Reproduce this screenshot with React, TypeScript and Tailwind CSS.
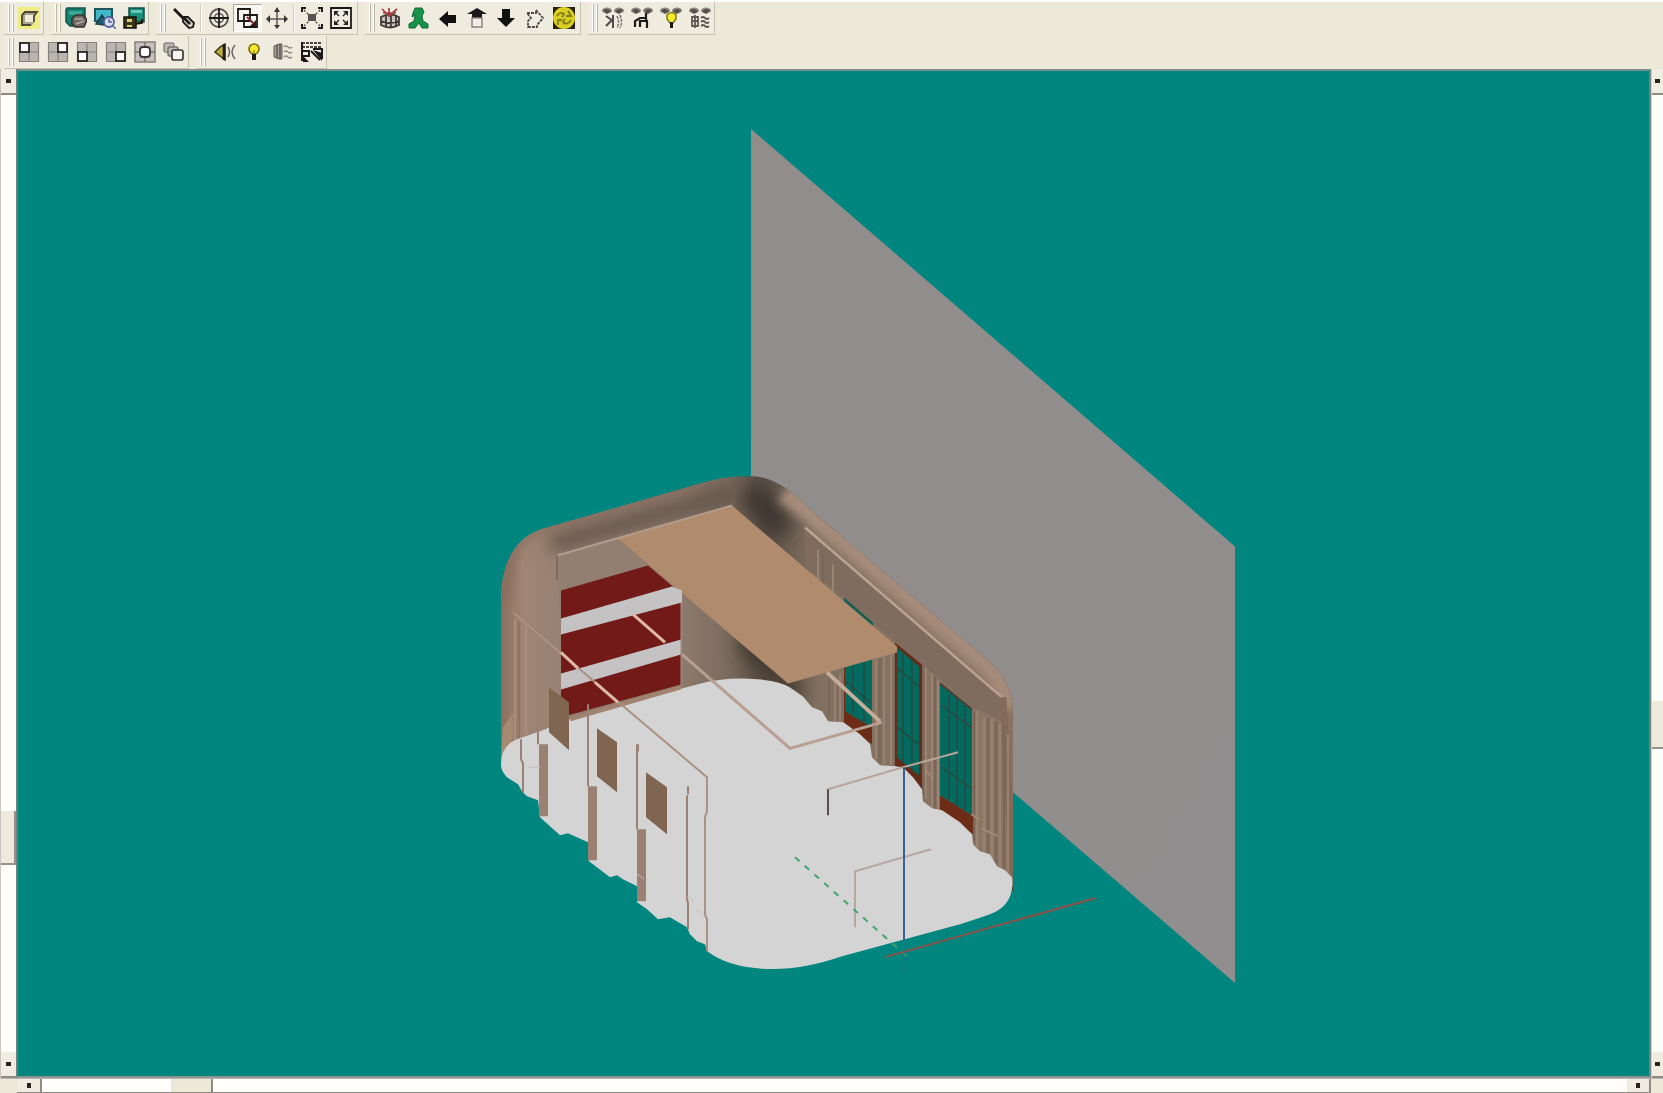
import type { ReactNode } from "react";

function Svg({ children }: { children: ReactNode }) {
  return (
    <svg viewBox="0 0 22 22" className="h-[22px] w-[22px]" fill="none" stroke="#1c1a18" strokeWidth="1.5">
      {children}
    </svg>
  );
}

function ToolButton({ label, pressed, children }: { label: string; pressed?: boolean; children: ReactNode }) {
  return (
    <button
      type="button"
      aria-label={label}
      className={
        pressed
          ? "flex h-7 w-[29px] items-center justify-center border border-r-white border-b-white border-t-[#aca899] border-l-[#aca899] bg-[#f8f6f0]"
          : "flex h-7 w-[29px] items-center justify-center"
      }
    >
      <Svg>{children}</Svg>
    </button>
  );
}

function Bar({ children }: { children: ReactNode }) {
  return (
    <div role="toolbar" className="flex h-[33px] items-center border-r border-b border-[#c5c2b4] bg-[#efecdf] pl-1">
      <span className="flex gap-[2px]">
        <span className="h-7 w-[2px] border-r border-[#bdb9aa] bg-white" />
        <span className="h-7 w-[2px] border-r border-[#bdb9aa] bg-white" />
      </span>
      {children}
    </div>
  );
}

function Divider() {
  return <span className="mx-[2px] h-7 w-[2px] border-l border-[#d2cfc0] bg-white" />;
}

function Viewports({ x, y }: { x: number; y: number }) {
  return (
    <>
      <rect x="1" y="1" width="20" height="20" fill="#b9b6b2" stroke="none" />
      <path d="M1.5 1.5h19v19h-19zM11 1v20M1 11h20" stroke="#85817d" strokeWidth="1.2" />
      <rect x={x} y={y} width="9" height="9" fill="#fff" stroke="#2a2826" strokeWidth="1.8" />
    </>
  );
}

function Eyes() {
  return (
    <g stroke="none">
      <ellipse cx="5" cy="3.5" rx="5" ry="3" fill="#8a857f" />
      <ellipse cx="17" cy="3.5" rx="5" ry="3" fill="#8a857f" />
      <path d="M1 3l4-1 4 2-4 3zM13 4l4-2 4 1-4 4z" fill="#514d49" />
    </g>
  );
}

function TopToolbars() {
  return (
    <div className="flex gap-[7px] pl-1">
      <Bar>
        <ToolButton label="Render box">
          <rect width="22" height="22" fill="#efec86" stroke="none" />
          <path d="M3 8l4-4h13l-4 4v8l-3 3H3z" fill="#a9a48f" stroke="none" />
          <path d="M4 8v10h9M4 8l3-3h12l-3 4v6" stroke="#4d4933" strokeWidth="1.8" />
          <path d="M7 8h8v7H7z" fill="#efecd9" stroke="none" />
        </ToolButton>
      </Bar>
      <Bar>
        <ToolButton label="Print scene">
          <path d="M2 1h18v12l-2 6H5l-4-4V3z" fill="#0d8370" stroke="#18514b" />
          <path d="M4 4h13v4H4z" fill="#3ea896" stroke="none" />
          <path d="M7 11l4-3h7l4 5-3 7h-9l-3-3z" fill="#706a65" stroke="#34302e" />
          <path d="M10 12h8M11 17l8-3" stroke="#b2aca4" />
        </ToolButton>
        <ToolButton label="Preview scene">
          <rect x="1" y="2" width="17" height="12" fill="#3fbac6" stroke="#23545e" strokeWidth="2" />
          <path d="M2 17l6-9 4 6-2 4z" fill="#176170" stroke="#233b44" />
          <circle cx="15" cy="15" r="5" fill="#dce0ed" stroke="#5361a0" strokeWidth="1.8" />
          <path d="M18 18l4 4M15 12v3h3" stroke="#5361a0" />
        </ToolButton>
        <ToolButton label="Save scene">
          <path d="M6 1h15v14H6z" fill="#178f7c" stroke="#164b42" />
          <path d="M8 3h11v3H8z" fill="#65c6b8" stroke="none" />
          <path d="M1 10h12v11H1zM13 17l6-1v-4" fill="#3b351c" stroke="#15120a" />
          <path d="M4 12h5v3H4zM4 18h5v2H4z" fill="#d9cf75" stroke="none" />
        </ToolButton>
      </Bar>
      <Bar>
        <span className="w-[3px]" />
        <ToolButton label="Brush">
          <path d="M1 2l11 11" strokeWidth="3" />
          <path d="M10 10h5l6 6-1 4-4 1-6-6z" fill="#d6d2c7" strokeWidth="1.8" />
          <path d="M10 10l7 7" strokeWidth="2.6" />
        </ToolButton>
        <Divider />
        <ToolButton label="Orbit">
          <circle cx="11" cy="11" r="9" stroke="#55514c" strokeWidth="1.8" />
          <circle cx="11" cy="11" r="4.5" stroke="#55514c" />
          <path d="M11 1v20M1 11h20" strokeWidth="1.8" />
        </ToolButton>
        <ToolButton label="Zoom window" pressed>
          <path d="M1 2h12v12H1z" strokeWidth="1.8" />
          <path d="M7 8h13v12H7z" strokeWidth="1.8" />
          <path d="M10 10l6 6" stroke="#7e2c2c" strokeWidth="2" />
          <path d="M19 13v6h-6z" fill="#3b1818" stroke="none" />
        </ToolButton>
        <ToolButton label="Pan">
          <path d="M11 2v17M2 12h18" stroke="#5a5651" />
          <path d="M11 0l3 5H8zM11 22l3-4H8zM0 12l4-4v8zM22 12l-4-4v8z" fill="#3a3733" stroke="none" />
        </ToolButton>
        <Divider />
        <ToolButton label="Zoom in">
          <path d="M1 5V1h4M17 1h4v4M1 17v4h4M21 17v4h-4" strokeWidth="2" />
          <path d="M3 3l5 5M19 3l-5 5M3 19l5-5M19 19l-5-5" stroke="#55514d" strokeDasharray="2 2" />
          <rect x="7" y="7" width="8" height="7" fill="#55514d" stroke="none" />
        </ToolButton>
        <ToolButton label="Zoom extents">
          <path d="M1 1h20v20H1z" strokeWidth="1.8" />
          <path d="M4 4h5L4 9zM18 4h-5l5 5zM4 18h5l-5-5zM18 18h-5l5-5z" fill="#2b2926" stroke="none" />
          <path d="M5 5l4 4M17 5l-4 4M5 17l4-4M17 17l-4-4" strokeWidth="1.3" />
        </ToolButton>
        <span className="w-[2px]" />
      </Bar>
      <Bar>
        <ToolButton label="Scene cage">
          <path d="M2 10q9-5 18 0v8q-9 5-18 0zM2 14q9 4 18 0M7 8v12M12 7v14M17 8v12" fill="#c9c4bd" stroke="#3f3b38" strokeWidth="1.8" />
          <path d="M3 2l7 7M18 2l-8 7M10 1v9M4 6h13" stroke="#a53b42" strokeWidth="1.7" />
        </ToolButton>
        <ToolButton label="Walk">
          <path d="M7 1h7l2 4-2 4 1 5 5 3v4h-6l-3-5-4 5H1v-4l5-3 1-6-3 2 1-4z" fill="#169348" stroke="#166737" strokeWidth="1" />
        </ToolButton>
        <ToolButton label="Move left">
          <path d="M2 12l9-8v4h8v8h-8v4z" fill="#111" stroke="none" />
        </ToolButton>
        <ToolButton label="Move back">
          <path d="M11 1l10 6h-5v4H6V7H1z" fill="#171717" stroke="none" />
          <path d="M6 11h10v9H6z" fill="#f1eee6" stroke="#8a8680" />
        </ToolButton>
        <ToolButton label="Move down">
          <path d="M7 2h8v9h5l-9 9-9-9h5z" fill="#111" stroke="none" />
        </ToolButton>
        <ToolButton label="Turn">
          <path d="M3 6h9V3l7 8-6 7v2H4v-6l3-3z" fill="#f1eee6" stroke="#4e4b45" strokeDasharray="3 1" strokeWidth="1.8" />
        </ToolButton>
        <ToolButton label="Rotate view">
          <rect width="22" height="22" fill="#262114" stroke="none" />
          <circle cx="11" cy="11" r="11" fill="#d8cf22" stroke="none" />
          <path d="M4 9q3-5 7-2l-2 3M18 13q-4 6-8 2l2-3M15 4l3 5h-5M5 18v-5h4" stroke="#817a18" strokeWidth="1.8" />
        </ToolButton>
        <span className="w-[2px]" />
      </Bar>
      <Bar>
        <ToolButton label="View speakers">
          <Eyes />
          <path d="M4 9l7 5M4 19l7-7M11 8v13" stroke="#4e4a46" strokeWidth="2" />
          <path d="M15 9q3 6 0 12M18 8q3 7 0 13" stroke="#77736e" strokeDasharray="3 1" />
        </ToolButton>
        <ToolButton label="View seating">
          <Eyes />
          <path d="M4 20v-6l5-3h6M9 13v7M15 6v8M8 14h8v7" strokeWidth="2.2" />
        </ToolButton>
        <ToolButton label="View lights">
          <Eyes />
          <path d="M7 8q5-5 9 0v4l-3 4h-3l-3-4z" fill="#f4ed29" stroke="#807a1a" />
          <path d="M11.5 15v6" strokeWidth="3" />
        </ToolButton>
        <ToolButton label="View surfaces">
          <Eyes />
          <path d="M3 10h6v9H3zM6 8v13M3 14h6M12 11q2-2 4 0t4 0M12 15q2-2 4 0t4 0M12 19q2-2 4 0t4 0" stroke="#5e5a56" strokeWidth="1.8" />
        </ToolButton>
      </Bar>
    </div>
  );
}

function LowerToolbars() {
  return (
    <div className="flex gap-[7px] pl-1">
      <Bar>
        <ToolButton label="Top left view"><Viewports x={2} y={2} /></ToolButton>
        <ToolButton label="Top right view"><Viewports x={11} y={2} /></ToolButton>
        <ToolButton label="Bottom left view"><Viewports x={2} y={11} /></ToolButton>
        <ToolButton label="Bottom right view"><Viewports x={11} y={11} /></ToolButton>
        <ToolButton label="Centre view">
          <rect x="1" y="1" width="20" height="20" fill="#c4c0bd" stroke="#85817d" />
          <path d="M11 1v20M1 11h20" stroke="#77736f" />
          <rect x="6" y="6" width="10" height="10" rx="3" fill="#fff" stroke="#3a3836" strokeWidth="1.8" />
        </ToolButton>
        <ToolButton label="Cascade views">
          <rect x="1" y="2" width="10" height="9" rx="2" fill="#bbb7b2" stroke="#8b8783" />
          <rect x="5" y="6" width="10" height="9" rx="2" fill="#bbb7b2" stroke="#77736f" />
          <rect x="9" y="9" width="11" height="10" rx="2" fill="#f7f5f0" stroke="#3a3836" strokeWidth="1.7" />
        </ToolButton>
      </Bar>
      <Bar>
        <span className="w-1" />
        <ToolButton label="Speakers">
          <path d="M1 11l5-5 5-3v16l-5-4z" fill="#b7ac38" stroke="#38341d" />
          <path d="M10 3v16" strokeWidth="2.5" />
          <path d="M14 6q3 5 0 10M21 4q-6 7 0 14" stroke="#6a6661" />
        </ToolButton>
        <ToolButton label="Lights">
          <circle cx="11" cy="8" r="5" fill="#f5e82d" stroke="#7b731f" strokeWidth="1.7" />
          <path d="M11 9v5" stroke="#9a8d1b" />
          <path d="M11 13v6" strokeWidth="4" />
        </ToolButton>
        <ToolButton label="Surfaces">
          <path d="M2 5l5-2h3v15H7l-5-2z" fill="#a5a19b" stroke="#5e5a56" strokeWidth="1" />
          <path d="M5 4v13M8 3v15" stroke="#5e5a56" />
          <path d="M12 6q2-2 4 0t4 0M12 11q2-2 4 0t4 0M12 16q2-2 4 0t4 0" stroke="#8e8a86" strokeWidth="1.5" />
        </ToolButton>
        <ToolButton label="Settings list">
          <path d="M1 2h20M1 6h20" stroke="#4a4642" strokeWidth="2" strokeDasharray="3 1" />
          <path d="M1 1v19M2 10h6v5H2M10 10l9 9M12 8h9v10" strokeWidth="2" />
          <path d="M12 9l9 3v8zM2 15l6 6H2z" fill="#171717" stroke="none" />
        </ToolButton>
      </Bar>
    </div>
  );
}

const floorPath =
  "M501 765Q501 746 517 740L540 732 570 720 623 705 697 685Q718 679 743 679Q778 680 790 688L803 697 812 708 822 712 828 722 843 723 860 735 870 745 872 758 880 766 895 767 903 768 913 778 922 790 923 802 932 809 942 811 960 823 972 835 973 845 980 852 990 855 997 867 1005 871 1012 878Q1015 906 990 915Q970 922 960 925L843 957Q805 970 773 970Q730 970 707 952L705 945 697 942 690 935 687 928 670 918 658 920 647 910 637 903V887L623 880 617 876 610 878 589 862 588 843 568 834 560 836 540 818 538 801 527 797 522 792 518 785 507 778Q501 772 501 765Z";

const shellPath =
  "M501 770V593C504 553 522 534 547 528L700 484Q727 475 757 477Q783 481 810 510L987 660Q1013 681 1013 715V892L800 760H520Z";

function Scene() {
  return (
    <svg role="img" aria-label="Room model" viewBox="18 71 1631 1006" preserveAspectRatio="none" className="block h-full w-full">
      <defs>
        <linearGradient id="plane" x1="0" y1="0" x2="1" y2="1">
          <stop offset="0" stopColor="#908d8b" />
          <stop offset="1" stopColor="#928e8f" />
        </linearGradient>
        <linearGradient id="leftWall" x1="501" y1="0" x2="770" y2="0" gradientUnits="userSpaceOnUse">
          <stop offset="0" stopColor="#8b6f5d" />
          <stop offset="0.08" stopColor="#a08574" />
          <stop offset="0.2" stopColor="#988273" />
          <stop offset="0.65" stopColor="#8f7c6f" />
          <stop offset="0.85" stopColor="#7a6a5e" />
          <stop offset="1" stopColor="#4e443b" />
        </linearGradient>
        <linearGradient id="rightWall" x1="750" y1="0" x2="1013" y2="0" gradientUnits="userSpaceOnUse">
          <stop offset="0" stopColor="#5a4e45" stopOpacity="0" />
          <stop offset="0.1" stopColor="#63574d" />
          <stop offset="0.25" stopColor="#80705f" />
          <stop offset="0.9" stopColor="#8c7565" />
          <stop offset="1" stopColor="#8a705f" />
        </linearGradient>
        <clipPath id="shellClip"><path d={shellPath} /></clipPath>
        <filter id="soft" filterUnits="userSpaceOnUse" x="450" y="420" width="620" height="520"><feGaussianBlur stdDeviation="9" /></filter>
        <filter id="softer" filterUnits="userSpaceOnUse" x="450" y="420" width="620" height="520"><feGaussianBlur stdDeviation="4" /></filter>
      </defs>

      <path d="M751 129L1235 547V984L1013 793 751 568Z" fill="url(#plane)" />
      <path d={shellPath} fill="url(#leftWall)" />
      <g clipPath="url(#shellClip)">
        <path d="M750 465L800 480 1030 680V900L750 700Z" fill="url(#rightWall)" />
        <path d="M550 545L735 493" stroke="#5c4e45" strokeWidth="15" filter="url(#soft)" />
        <path d="M745 496Q768 500 782 535" stroke="#3d342d" strokeWidth="24" fill="none" filter="url(#soft)" />
        <path d="M740 640L800 695" stroke="#3d342c" strokeWidth="16" filter="url(#soft)" />
        <path d="M506 600Q508 535 547 529L700 485" stroke="#85695a" strokeWidth="5" fill="none" filter="url(#softer)" />
        <path d="M785 492L815 516 987 663Q1006 681 1006 710" stroke="#a68b7a" strokeWidth="22" fill="none" filter="url(#softer)" />
        <path d="M805 528L1002 698V722L972 708 840 594 805 565Z" fill="#7f6c5f" />
        <path d="M805 528L1002 698" stroke="#bba392" strokeWidth="2.5" />
        <path d="M1003 698L1013 880" stroke="#826a5b" strokeWidth="7" />
      </g>

      <g strokeWidth="2" fill="none">
        <path d="M818 550V581M833 565V593M835 678V722M840 675V723M876 660V760M884 657V765M891 653V766M926 668V800M932 674V809M938 681V810M977 712V848M984 718V853M992 720V860M1000 724V868M1008 735V874" stroke="#9a8271" />
        <path d="M823 555V585M812 680V706M829 678V717M880 658V763M895 655V766M923 666V802M935 677V810M974 712V842M988 719V855M996 722V864M1004 728V870" stroke="#796659" />
      </g>
      <path d="M844 598L873 623V628L844 604Z" fill="#165f50" />
      <path d="M844 667L872 659V745L844 723Z" fill="#6c2c16" />
      <path d="M845 666L872 659V728L845 712Z" fill="#04695e" />
      <path d="M895 643L922 665V790L895 766Z" fill="#642b18" />
      <path d="M897 648L919 667V776L897 758Z" fill="#04695e" />
      <path d="M940 796L973 816V835L940 811Z" fill="#6c2c16" />
      <path d="M940 684L972 710V816L940 796Z" fill="#04695e" />
      <path d="M853 665V715M864 662V723M846 682L871 704M903 652V764M912 660V772M897 669L919 687M897 728L919 745M949 695V800M957 700V806M965 706V812M942 706L971 728M942 768L971 789" stroke="#244b40" strokeWidth="1.5" />
      <path d="M940 684L972 710" stroke="#4a4236" strokeWidth="2" />
      <path d="M971 815L980 820M981 829L998 837M925 770L933 779" stroke="#a38b79" strokeWidth="1.5" />

      <path d="M558 556L618 539 683 597V690L570 718 558 590Z" fill="#927f71" />
      <path d="M618 539L732 506 897 647V653L788 684Z" fill="#b08b6d" />
      <path d="M557 556L732 506" fill="none" stroke="#b39c8c" strokeWidth="2" />
      <path d="M557 580V556" stroke="#7e6b5e" strokeWidth="2" />
      <path d="M561 591L648 566 681 594V685L561 718Z" fill="#711a18" />
      <path d="M561 619L672 587 682 591V603L561 635ZM561 674L681 640V655L561 690Z" fill="#c4c2c3" />
      <path d="M681 603V686" stroke="#a38e7f" />
      <path d="M515 620V742M526 625V735" stroke="#a88f80" strokeWidth="2" />
      <path d="M519 622V740" stroke="#8d7565" strokeWidth="2" />
      <path d="M503 728L513 714V738L501 760Z" fill="#a68a72" />

      <path d={floorPath} fill="#d4d4d4" />
      <path d="M570 720L681 688" stroke="#a28370" strokeWidth="4" />
      <path d="M549 688L569 703V751L549 733ZM597 729L617 743V793L597 777ZM646 773L667 788V835L646 818Z" fill="#806650" />
      <path d="M539 745H548V817H539ZM588 787H597V861H588ZM637 830H646V902H637Z" fill="#9a8174" />
      <path d="M521 740V760L523 764V793M538 732V745M588 705V787M637 745V830M638 745V752M687 796V900L688 904V930M688 787V795" fill="none" stroke="#9a8174" strokeWidth="2" />

      <path d="M513 613L707 778V812L705 818V916L707 920V952" fill="none" stroke="#aa9182" strokeWidth="2" />
      <path d="M561 653L578 669M595 683L618 703M633 615L665 643" stroke="#e0b6a4" strokeWidth="3" />
      <path d="M682 655L790 749 882 723" fill="none" stroke="#b79f91" strokeWidth="3" />
      <path d="M827 673L880 722" stroke="#c4ac99" strokeWidth="4" />
      <path d="M828 790L903 768 958 753" fill="none" stroke="#b8a599" strokeWidth="2" />
      <path d="M828 790V816" stroke="#57504d" strokeWidth="2" />
      <path d="M855 928V872L931 850" fill="none" stroke="#b7a6a1" strokeWidth="2" />
      <path d="M637 875L644 880M687 897L694 903M696 910L705 917M528 768H540" stroke="#c9beb5" />

      <path d="M795 858L910 960" stroke="#42a46f" strokeWidth="2" strokeDasharray="6 7" />
      <path d="M885 958L1095 899" stroke="#8d5149" strokeWidth="2" />
      <path d="M904 768V942" stroke="#386294" strokeWidth="2" />
      <path d="M904 942V972" stroke="#20737e" strokeWidth="1" />
    </svg>
  );
}

function VerticalScroll({ side }: { side: "left" | "right" }) {
  const left = side === "left";
  return (
    <div className={left ? "flex w-4 flex-col border-l border-[#c7c5bd] bg-[#fffefa]" : "flex w-3 flex-col border-l border-[#d5d2ca] bg-[#fffefa]"}>
      <button type="button" aria-label="Scroll up" className="flex h-[26px] items-center justify-center border-b-2 border-[#8f8b82] bg-[#f1ece2]">
        <span className="h-1 w-[5px] bg-[#2b2218]" />
      </button>
      <div className={left ? "grow-[717]" : "grow-[607]"} />
      <div className={left ? "h-[54px] border-r-2 border-b-2 border-[#96918a] bg-[#efe8dc]" : "h-12 border-b-2 border-[#96918a] bg-[#efeadd]"} />
      <div className={left ? "grow-[187]" : "grow-[303]"} />
      <button type="button" aria-label="Scroll down" className="flex h-[26px] items-center justify-center border-b-2 border-[#8f8b82] bg-[#f1ece2]">
        <span className="h-1 w-[5px] bg-[#2b2218]" />
      </button>
    </div>
  );
}

export default function App() {
  return (
    <main className="flex h-screen flex-col overflow-hidden bg-[#ece9d8] font-['Liberation_Sans',sans-serif]">
      <header className="flex flex-col gap-px border-t-2 border-white">
        <TopToolbars />
        <LowerToolbars />
      </header>
      <div className="flex min-h-0 flex-1">
        <VerticalScroll side="left" />
        <section className="min-w-0 flex-1 border-2 border-t-[#76908a] border-r-[#77827b] border-b-[#8f9490] border-l-[#64817e] bg-[#00857f]">
          <Scene />
        </section>
        <VerticalScroll side="right" />
      </div>
      <footer className="flex h-[15px] border-t border-[#b9b5b0] pr-3 pl-[17px]">
        <div className="flex flex-1 border-b border-[#8f8b82] bg-[#fffefa]">
          <button type="button" aria-label="Scroll left" className="flex w-[25px] items-center justify-center border-r-2 border-[#8f8b82] bg-[#f1ece2]">
            <span className="h-[5px] w-1 bg-[#2b2218]" />
          </button>
          <div className="grow-[129]" />
          <div className="w-[42px] border-r-2 border-[#8f8b82] bg-[#ece9d8]" />
          <div className="grow-[1414]" />
          <button type="button" aria-label="Scroll right" className="flex w-6 items-center justify-center border-r-2 border-[#8f8b82] bg-[#f1ece2]">
            <span className="h-[5px] w-1 bg-[#2b2218]" />
          </button>
        </div>
      </footer>
    </main>
  );
}
